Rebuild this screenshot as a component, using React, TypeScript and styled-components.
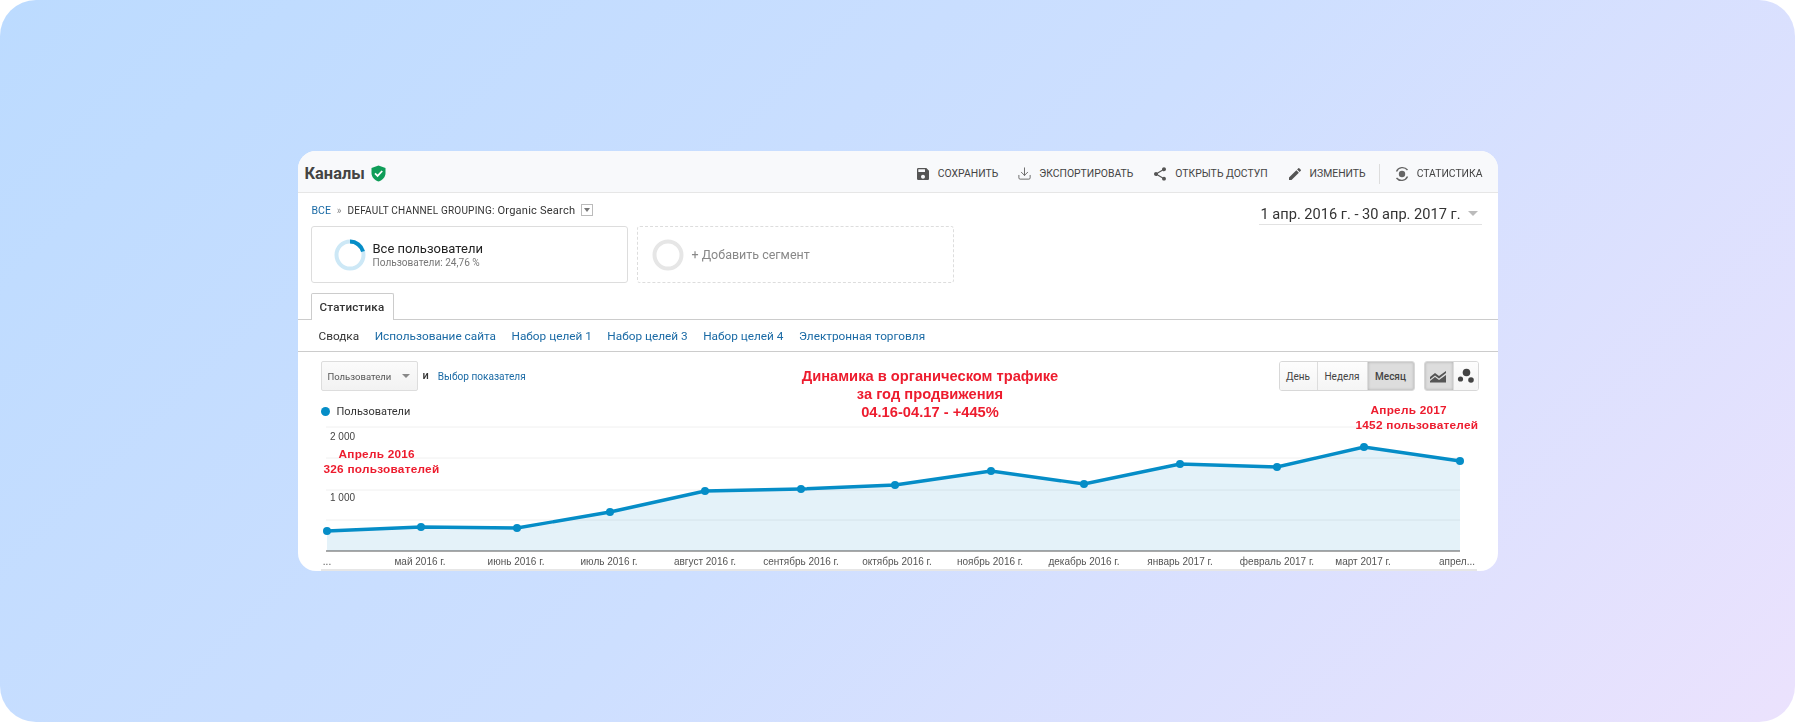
import styled, { createGlobalStyle } from "styled-components";
import { Download } from "lucide-react";
import { MdSave, MdShare, MdEdit } from "react-icons/md";

const GlobalStyle = createGlobalStyle`
  html, body {
    margin: 0;
    padding: 0;
    background: #fff;
  }
  * {
    box-sizing: border-box;
  }
  body {
    font-family: Roboto, "Liberation Sans", sans-serif;
  }
`;

const Page = styled.div`
  width: 1795px;
  height: 722px;
  border-radius: 36px;
  background: linear-gradient(135deg, #bcdbff 0%, #cddfff 50%, #ebe2fd 100%);
  display: flex;
  align-items: center;
  justify-content: center;
`;

const Card = styled.div`
  width: 1200px;
  height: 420px;
  border-radius: 18px;
  background: #fff;
  overflow: hidden;
`;

// the source is a scaled-up raster, so everything in it is a little soft
const Shot = styled.div`
  height: 100%;
  display: flex;
  flex-direction: column;
  filter: blur(0.4px);
`;

const TopBar = styled.div`
  height: 42px;
  flex: none;
  background: #f8f9fb;
  border-bottom: 1px solid #e6e6e6;
  display: flex;
  align-items: center;
  justify-content: space-between;
  padding: 4px 15px 0 7px;
`;

const TitleWrap = styled.div`
  display: flex;
  align-items: center;
  gap: 6px;
`;

const Title = styled.div`
  font-size: 16.4px;
  font-weight: 700;
  color: #444;
`;

const Actions = styled.div`
  display: flex;
  align-items: center;
  gap: 19px;
`;

const Action = styled.div`
  display: flex;
  align-items: center;
  gap: 7px;
  font-size: 10.4px;
  color: #444;
  white-space: nowrap;
`;

const Divider = styled.div`
  width: 1px;
  height: 20px;
  background: #ddd;
  margin: 0 -5px 0 -6px;
`;

const RangeRow = styled.div`
  display: flex;
  justify-content: space-between;
  padding: 9px 16px 0 14px;
  height: 33px;
  flex: none;
`;

const Crumbs = styled.div`
  display: flex;
  align-items: center;
  align-self: flex-start;
  gap: 6px;
  color: #333;
  height: 16px;
`;

const CrumbLink = styled.span`
  color: #1a6aa5;
  font-size: 10.5px;
`;

const CrumbSep = styled.span`
  color: #888;
  font-size: 10px;
`;

const CrumbKey = styled.span`
  font-size: 10px;
  letter-spacing: 0.2px;
`;

const CrumbValue = styled.span`
  font-size: 11.1px;
  letter-spacing: 0.2px;
`;

const CrumbCaret = styled.span`
  width: 12px;
  height: 12px;
  border: 1px solid #bbb;
  display: flex;
  align-items: center;
  justify-content: center;
  &::after {
    content: "";
    border: 3px solid transparent;
    border-top: 4px solid #777;
    border-bottom: 0;
  }
`;

const DateBox = styled.div`
  width: 223px;
  height: 23px;
  border-bottom: 1px solid #e2e2e2;
  display: flex;
  align-items: center;
  justify-content: flex-end;
  gap: 7px;
  font-size: 14.6px;
  color: #333;
  padding: 1px 4px 0 0;
`;

const GreyCaret = styled.span`
  border: 5px solid transparent;
  border-top: 5px solid #bbb;
  border-bottom: 0;
`;

const Segments = styled.div`
  display: flex;
  gap: 9px;
  padding-left: 13px;
  flex: none;
`;

const Segment = styled.div<{ $dashed?: boolean }>`
  width: 317px;
  height: 57px;
  border: 1px ${(p) => (p.$dashed ? "dashed #ddd" : "solid #ddd")};
  border-radius: 3px;
  display: flex;
  align-items: center;
  gap: ${(p) => (p.$dashed ? "8px" : "7px")};
  padding-left: ${(p) => (p.$dashed ? "14px" : "22px")};
`;

const SegmentText = styled.div`
  display: flex;
  flex-direction: column;
  gap: 1px;
`;

const SegmentName = styled.div`
  font-size: 13px;
  color: #222;
`;

const SegmentSub = styled.div`
  font-size: 10.1px;
  color: #777;
`;

const AddSegment = styled.div`
  font-size: 12.5px;
  color: #888;
`;

const TabRow = styled.div`
  flex: none;
  margin-top: 10px;
  height: 27px;
  border-bottom: 1px solid #ccc;
  padding-left: 13px;
  display: flex;
  align-items: flex-end;
`;

const Tab = styled.div`
  width: 83px;
  height: 27px;
  border: 1px solid #ccc;
  border-bottom: 0;
  border-radius: 2px 2px 0 0;
  background: #fff;
  margin-bottom: -1px;
  font-size: 11.6px;
  font-weight: 500;
  letter-spacing: 0.2px;
  color: #333;
  display: flex;
  align-items: center;
  justify-content: center;
`;

const SubNav = styled.div`
  height: 32px;
  flex: none;
  border-bottom: 1px solid #ccc;
  display: flex;
  align-items: center;
  gap: 15.5px;
  padding-left: 21px;
  font-size: 11.8px;
  color: #1a6aa5;
`;

const NavCurrent = styled.span`
  color: #333;
`;

const Controls = styled.div`
  display: flex;
  justify-content: space-between;
  padding: 9px 19px 0 23px;
  flex: none;
`;

const MetricPick = styled.div`
  display: flex;
  align-items: center;
  gap: 5px;
  height: 30px;
`;

const Select = styled.div`
  width: 97px;
  height: 30px;
  border: 1px solid #ddd;
  border-radius: 2px;
  background: linear-gradient(#fbfbfb, #f2f2f2);
  display: flex;
  align-items: center;
  justify-content: space-between;
  padding: 0 7px 0 6px;
  font-size: 9.5px;
  color: #555;
`;

const SmallCaret = styled.span`
  border: 4px solid transparent;
  border-top: 4px solid #888;
  border-bottom: 0;
`;

const And = styled.span`
  font-size: 11px;
  font-weight: 500;
  color: #333;
  margin-top: -2px;
`;

const MetricLink = styled.span`
  font-size: 10.1px;
  color: #1a6aa5;
  margin-left: 4px;
`;

const Toggles = styled.div`
  display: flex;
  gap: 9px;
`;

const ToggleGroup = styled.div`
  display: flex;
  height: 30px;
  border: 1px solid #d8d8d8;
  border-radius: 3px;
  overflow: hidden;
`;

const Toggle = styled.div<{ $active?: boolean; $w: number }>`
  width: ${(p) => p.$w}px;
  display: flex;
  align-items: center;
  justify-content: center;
  font-size: 10px;
  font-weight: ${(p) => (p.$active ? 500 : 400)};
  color: #444;
  background: ${(p) => (p.$active ? "#ddd" : "linear-gradient(#fdfdfd, #f5f5f5)")};
  box-shadow: ${(p) => (p.$active ? "inset 0 0 3px #aaa" : "none")};
  & + & {
    border-left: 1px solid #ddd;
  }
`;

const ChartArea = styled.div`
  position: relative;
  flex: 1;
`;

const BottomRule = styled.div`
  height: 2px;
  flex: none;
  margin: 0 21px 0 23px;
  background: #e6e6e6;
`;

const Legend = styled.div`
  position: absolute;
  left: 23px;
  top: 14px;
  display: flex;
  align-items: center;
  gap: 7px;
  font-size: 11px;
  color: #333;
`;

const LegendDot = styled.span`
  width: 9px;
  height: 9px;
  border-radius: 50%;
  background: #058dc7;
`;

const ChartSvg = styled.svg`
  position: absolute;
  left: 0;
  top: 0;
`;

const YLabel = styled.text`
  font-family: "Liberation Sans", sans-serif;
  font-size: 10px;
  fill: #444;
`;

const XLabel = styled.text`
  font-family: "Liberation Sans", sans-serif;
  font-size: 10px;
  fill: #555;
  text-anchor: middle;
`;

const Note = styled.div<{ $size: number }>`
  position: absolute;
  font-family: "Liberation Sans", sans-serif;
  font-weight: 700;
  color: #ed1c2e;
  white-space: nowrap;
  font-size: ${(p) => p.$size}px;
`;

const MainNote = styled(Note)`
  left: 400px;
  top: -24px;
  width: 465px;
  text-align: center;
  line-height: 18px;
`;

const SideNote = styled(Note)`
  letter-spacing: 0.25px;
  line-height: 15px;
`;

const StartNote = styled(SideNote)`
  left: 26px;
  top: 56px;
`;

const EndNote = styled(SideNote)`
  left: 1058px;
  top: 12px;
`;

const NoteLead = styled.span`
  margin-left: 15px;
`;

// page coordinates of the chart box, the points below are read off the page
const CHART_X = 297;
const CHART_Y = 391;

const points: [number, number][] = [
  [326, 531],
  [420, 527],
  [516, 528],
  [609, 512],
  [704, 491],
  [800, 489],
  [894, 485],
  [990, 471],
  [1083, 484],
  [1179, 464],
  [1276, 467],
  [1363, 447],
  [1459, 461],
].map(([x, y]) => [x - CHART_X, y - CHART_Y] as [number, number]);

const BASE_Y = 551 - CHART_Y;
const grid = [427, 458, 490, 520].map((y) => y - CHART_Y);

const xLabels: [string, number][] = [
  ["...", 326],
  ["май 2016 г.", 419],
  ["июнь 2016 г.", 515],
  ["июль 2016 г.", 608],
  ["август 2016 г.", 704],
  ["сентябрь 2016 г.", 800],
  ["октябрь 2016 г.", 896],
  ["ноябрь 2016 г.", 989],
  ["декабрь 2016 г.", 1083],
  ["январь 2017 г.", 1179],
  ["февраль 2017 г.", 1276],
  ["март 2017 г.", 1362],
  ["апрел...", 1456],
];

function Shield() {
  return (
    <svg width="15" height="17" viewBox="0 0 15 17">
      <path d="M7.5 0.5L14.5 3V8C14.5 12 11.5 15.3 7.5 16.5C3.5 15.3 0.5 12 0.5 8V3Z" fill="#0f9d58" />
      <path d="M4 8.3L6.6 10.9L11.2 6" fill="none" stroke="#fff" strokeWidth="1.8" />
    </svg>
  );
}

function Donut({ color, arc }: { color: string; arc?: string }) {
  return (
    <svg width="32" height="32" viewBox="0 0 32 32">
      <circle cx="16" cy="16" r="13.5" fill="none" stroke={color} strokeWidth="4" />
      {arc && <path d="M16 2.5A13.5 13.5 0 0 1 29 12.5" fill="none" stroke={arc} strokeWidth="4" />}
    </svg>
  );
}

function Stats() {
  return (
    <svg width="16" height="16" viewBox="0 0 16 16">
      <path d="M2.5 5.5A6.5 6.5 0 0 1 13.5 4" fill="none" stroke="#666" strokeWidth="1.4" />
      <path d="M13.5 10.5A6.5 6.5 0 0 1 2.5 12" fill="none" stroke="#666" strokeWidth="1.4" />
      <circle cx="8" cy="8" r="3.2" fill="#666" />
    </svg>
  );
}

function AreaIcon() {
  return (
    <svg width="17" height="13" viewBox="0 0 17 13">
      <path d="M0 7L5 3L9 6L16 1V3L9 8.5L5 5.5L0 9.5Z" fill="#555" />
      <path d="M0 11L5 7L9 10L16 5V12.5H0Z" fill="#555" />
    </svg>
  );
}

function DotsIcon() {
  return (
    <svg width="18" height="16" viewBox="0 0 18 16">
      <circle cx="9.5" cy="4.5" r="3.8" fill="#444" />
      <circle cx="3.5" cy="11" r="2.6" fill="#444" />
      <circle cx="14" cy="12" r="2.8" fill="#444" />
    </svg>
  );
}

export default function App() {
  const line = points.map(([x, y]) => `${x},${y}`).join(" ");
  const first = points[0][0];
  const last = points[points.length - 1][0];
  return (
    <Page>
      <GlobalStyle />
      <Card>
        <Shot>
          <TopBar>
            <TitleWrap>
              <Title>Каналы</Title>
              <Shield />
            </TitleWrap>
            <Actions>
              <Action>
                <MdSave size={16} color="#555" />
                СОХРАНИТЬ
              </Action>
              <Action>
                <Download size={15} color="#666" strokeWidth={1.5} />
                ЭКСПОРТИРОВАТЬ
              </Action>
              <Action>
                <MdShare size={16} color="#555" />
                ОТКРЫТЬ ДОСТУП
              </Action>
              <Action>
                <MdEdit size={16} color="#555" />
                ИЗМЕНИТЬ
              </Action>
              <Divider />
              <Action>
                <Stats />
                СТАТИСТИКА
              </Action>
            </Actions>
          </TopBar>
          <RangeRow>
            <Crumbs>
              <CrumbLink>ВСЕ</CrumbLink>
              <CrumbSep>»</CrumbSep>
              <CrumbValue>
                <CrumbKey>DEFAULT CHANNEL GROUPING:</CrumbKey> Organic Search
              </CrumbValue>
              <CrumbCaret />
            </Crumbs>
            <DateBox>
              1 апр. 2016 г. - 30 апр. 2017 г.
              <GreyCaret />
            </DateBox>
          </RangeRow>
          <Segments>
            <Segment>
              <Donut color="#cde8f6" arc="#058dc7" />
              <SegmentText>
                <SegmentName>Все пользователи</SegmentName>
                <SegmentSub>Пользователи: 24,76 %</SegmentSub>
              </SegmentText>
            </Segment>
            <Segment $dashed>
              <Donut color="#e6e6e6" />
              <AddSegment>+ Добавить сегмент</AddSegment>
            </Segment>
          </Segments>
          <TabRow>
            <Tab>Статистика</Tab>
          </TabRow>
          <SubNav>
            <NavCurrent>Сводка</NavCurrent>
            <span>Использование сайта</span>
            <span>Набор целей 1</span>
            <span>Набор целей 3</span>
            <span>Набор целей 4</span>
            <span>Электронная торговля</span>
          </SubNav>
          <Controls>
            <MetricPick>
              <Select>
                Пользователи
                <SmallCaret />
              </Select>
              <And>и</And>
              <MetricLink>Выбор показателя</MetricLink>
            </MetricPick>
            <Toggles>
              <ToggleGroup>
                <Toggle $w={37}>День</Toggle>
                <Toggle $w={50}>Неделя</Toggle>
                <Toggle $active $w={47}>Месяц</Toggle>
              </ToggleGroup>
              <ToggleGroup>
                <Toggle $active $w={28}>
                  <AreaIcon />
                </Toggle>
                <Toggle $w={25}>
                  <DotsIcon />
                </Toggle>
              </ToggleGroup>
            </Toggles>
          </Controls>
          <ChartArea>
            <ChartSvg width="1200" height="178" viewBox="0 0 1200 178">
              {grid.map((y) => (
                <line key={y} x1={first - 1} x2={last} y1={y} y2={y} stroke="#f0f0f0" />
              ))}
              <polygon points={`${first},${BASE_Y} ${line} ${last},${BASE_Y}`} fill="#058dc7" fillOpacity="0.11" />
              <line x1={first - 1} x2={last} y1={BASE_Y} y2={BASE_Y} stroke="#555" />
              <polyline points={line} fill="none" stroke="#058dc7" strokeWidth="3.4" />
              {points.map(([x, y]) => (
                <circle key={x} cx={x} cy={y} r="4" fill="#058dc7" />
              ))}
              <YLabel x="32" y="49">2 000</YLabel>
              <YLabel x="32" y="110">1 000</YLabel>
              {xLabels.map(([label, x]) => (
                <XLabel key={label} x={x - CHART_X} y="174">{label}</XLabel>
              ))}
            </ChartSvg>
            <Legend>
              <LegendDot />
              Пользователи
            </Legend>
            <MainNote $size={14.7}>
              Динамика в органическом трафике
              <br />
              за год продвижения
              <br />
              04.16-04.17 - +445%
            </MainNote>
            <StartNote $size={11.8}>
              <NoteLead>Апрель 2016</NoteLead>
              <br />
              326 пользователей
            </StartNote>
            <EndNote $size={11.8}>
              <NoteLead>Апрель 2017</NoteLead>
              <br />
              1452 пользователей
            </EndNote>
          </ChartArea>
          <BottomRule />
        </Shot>
      </Card>
    </Page>
  );
}
